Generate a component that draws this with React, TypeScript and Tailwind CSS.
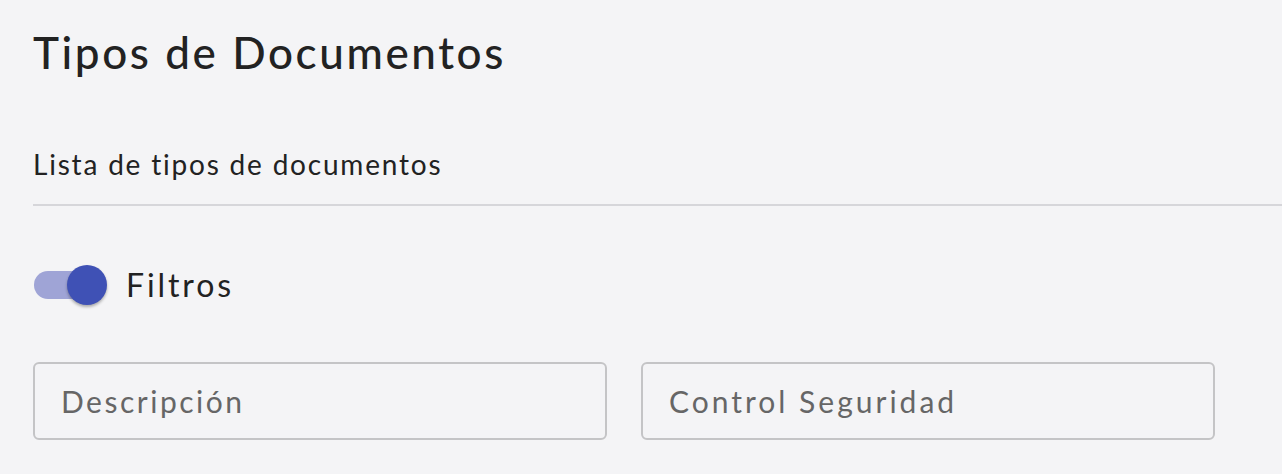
import {useState} from 'react'

function Toggle({checked, onChange}: {checked: boolean; onChange: (v: boolean) => void}) {
  return (
    <button
      type="button"
      onClick={() => onChange(!checked)}
      className="relative w-[74px] h-[40px] flex items-center"
    >
      <span
        className={
          'block w-[66px] h-[28px] rounded-full ml-[1px] ' +
          (checked ? 'bg-[#9fa4d6]' : 'bg-[#bdbdbd]')
        }
      />
      <span
        className={
          'absolute top-0 w-[40px] h-[40px] rounded-full shadow-[0_2px_3px_rgba(0,0,0,0.3)] ' +
          (checked ? 'left-[34px] bg-[#3f51b5]' : 'left-0 bg-white')
        }
      />
    </button>
  )
}

export default function App() {
  const [filters, setFilters] = useState(true)

  return (
    <div
      className="w-[1282px] h-[474px] bg-[#f4f4f6] overflow-hidden pl-[33px] text-[#222]"
      style={{fontFamily: 'Lato, "Open Sans", sans-serif'}}
    >
      <h1 className="text-[44px] leading-[44px] font-medium tracking-[2.6px] pt-[30px]">Tipos de Documentos</h1>
      <div className="mt-[76px] text-[28px] leading-[28px] tracking-[1.8px]">Lista de tipos de documentos</div>
      <div className="mt-[26px] h-[2px] bg-[#d6d6da]" />
      <div className="mt-[59px] flex items-center gap-[19px]">
        <Toggle checked={filters} onChange={setFilters} />
        <span className="text-[32px] leading-[40px] tracking-[2.9px]">Filtros</span>
      </div>
      <div className="mt-[57px] flex gap-[34px]">
        <input
          placeholder="Descripción"
          className="w-[574px] h-[78px] rounded-[6px] border-2 border-[#c4c4c6] bg-transparent px-[26px] text-[30px] tracking-[2.5px] placeholder:text-[#666]"
        />
        <input
          placeholder="Control Seguridad"
          className="w-[574px] h-[78px] rounded-[6px] border-2 border-[#c4c4c6] bg-transparent px-[26px] text-[30px] tracking-[3px] placeholder:text-[#666]"
        />
      </div>
    </div>
  )
}
